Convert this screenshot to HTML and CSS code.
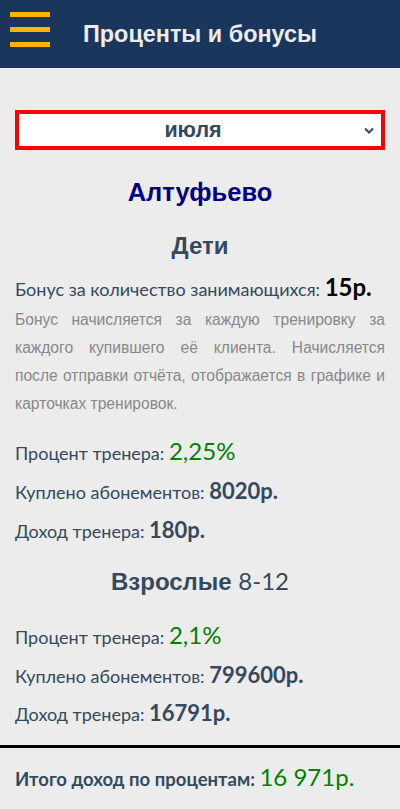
FILE: index.html
```html
<!DOCTYPE html>
<html lang="ru">
<head>
    <meta charset="UTF-8">
    <meta name="viewport" content="width=device-width, initial-scale=1.0">
    <title>Проценты и бонусы</title>
    <link rel="stylesheet" href="styles.css">
</head>
<body>
    <header class="topbar">
        <div class="burger">
            <span></span>
            <span></span>
            <span></span>
        </div>
        <h1 class="topbar-title">Проценты и бонусы</h1>
    </header>

    <main class="content">
        <div class="month-select">
            <span class="month-name">июля</span>
            <svg class="chevron" width="10" height="7" viewBox="0 0 10 7">
                <path d="M1 1.5 L5 5.5 L9 1.5" fill="none" stroke="#34495e" stroke-width="2"/>
            </svg>
        </div>

        <h2 class="place">Алтуфьево</h2>

        <h3 class="group-title">Дети</h3>
        <p class="row bonus-row">Бонус за количество занимающихся: <span class="bonus">15р.</span></p>
        <p class="note">Бонус начисляется за каждую тренировку за каждого купившего её клиента. Начисляется после отправки отчёта, отображается в графике и карточках тренировок.</p>

        <div class="stats">
            <p class="row">Процент тренера: <span class="percent">2,25%</span></p>
            <p class="row">Куплено абонементов: <span class="money">8020р.</span></p>
            <p class="row">Доход тренера: <span class="money">180р.</span></p>
        </div>

        <h3 class="group-title adults">Взрослые <span class="age">8-12</span></h3>
        <div class="stats adults-stats">
            <p class="row">Процент тренера: <span class="percent">2,1%</span></p>
            <p class="row">Куплено абонементов: <span class="money">799600р.</span></p>
            <p class="row">Доход тренера: <span class="money">16791р.</span></p>
        </div>
    </main>

    <hr class="divider">

    <p class="total">Итого доход по процентам: <span class="percent">16 971р.</span></p>
</body>
</html>
```

FILE: styles.css
```css
body {
    margin: 0;
    background-color: #ececec;
    font-family: Lato, sans-serif;
    color: #34495e;
}
.topbar {
    height: 68px;
    background-color: #1b365d;
    display: flex;
    align-items: center;
}
.burger {
    width: 40px;
    margin-left: 10px;
    display: flex;
    flex-direction: column;
    gap: 10px;
    margin-top: -9px;
}
.burger span {
    display: block;
    height: 5px;
    background-color: #ffb400;
}
.topbar-title {
    margin: 0 0 0 33px;
    font-family: "Liberation Sans", Arial, sans-serif;
    font-size: 23.4px;
    font-weight: bold;
    color: #ececec;
}
.content {
    padding: 42px 15px 0;
}
.month-select {
    height: 32px;
    padding-right: 14px;
    background: #fff;
    border: 4px solid #ff0000;
    display: flex;
    align-items: center;
    justify-content: center;
    position: relative;
}
.month-name {
    font-family: "Liberation Sans", Arial, sans-serif;
    font-size: 21.5px;
    font-weight: bold;
    color: #34495e;
}
.chevron {
    position: absolute;
    right: 7px;
    top: 13px;
}
.place {
    margin: 27px 0 0;
    line-height: 30px;
    text-align: center;
    font-family: "Liberation Sans", Arial, sans-serif;
    font-size: 25.5px;
    font-weight: bold;
    color: #000080;
}
.group-title {
    margin: 24px 0 0;
    line-height: 30px;
    text-align: center;
    font-family: "Liberation Sans", Arial, sans-serif;
    font-size: 24px;
    font-weight: bold;
    color: #34495e;
}
.age {
    font-family: Lato, sans-serif;
    font-weight: normal;
}
.row {
    margin: 0;
    font-size: 18px;
    line-height: 39px;
}
.bonus-row {
    margin-top: 13px;
    line-height: 30px;
}
.bonus {
    font-size: 24px;
    line-height: 1;
    font-weight: bold;
    color: #000;
}
.note {
    margin: 2px 0 0;
    font-family: "Liberation Sans", Arial, sans-serif;
    font-size: 15.6px;
    line-height: 28px;
    color: #888;
    text-align: justify;
}
.stats {
    margin-top: 16px;
}
.adults {
    margin-top: 15px;
}
.adults-stats {
    margin-top: 21px;
}
.adults-stats .row {
    line-height: 38.5px;
}
.percent {
    font-size: 24px;
    line-height: 1;
    color: #008000;
}
.money {
    font-size: 22px;
    line-height: 1;
    font-weight: bold;
}
.divider {
    margin: 11px 0 0;
    border: none;
    border-top: 3px solid #000;
}
.total {
    margin: 16px 15px 0;
    font-size: 18.5px;
    line-height: 30px;
    font-weight: bold;
}
.total .percent {
    font-weight: normal;
}
```
